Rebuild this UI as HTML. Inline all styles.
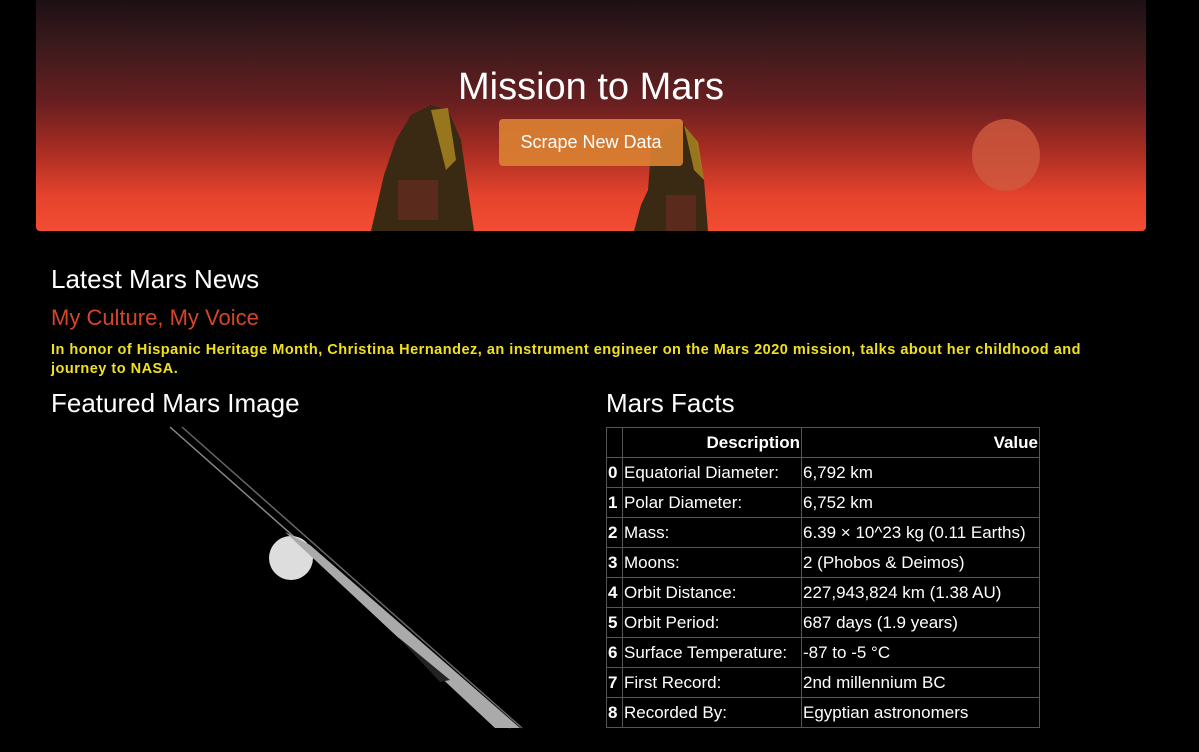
<!DOCTYPE html>
<html><head><meta charset="utf-8"><style>
*{margin:0;padding:0;box-sizing:border-box}
body{background:#000;width:1199px;height:752px;overflow:hidden;font-family:"Liberation Sans",sans-serif;color:#fff;position:relative}
.jumbo{position:absolute;left:36px;top:0;width:1110px;height:231px;border-radius:0 0 4px 4px;overflow:hidden;
background:linear-gradient(180deg,#1c1015 0%,#3c1a1c 20%,#6a1f20 45%,#a82d22 65%,#e5432c 85%,#f34d33 100%)}
.jumbo h1{position:absolute;left:0;right:0;top:66px;text-align:center;font-size:38px;font-weight:500}
.btn{position:absolute;left:463px;top:119px;width:184px;height:47px;border-radius:4px;background:rgba(220,130,50,.9);font-size:18px;line-height:47px;text-align:center}
.ab{position:absolute}
h2{position:absolute;font-size:26px;font-weight:500}
table{position:absolute;left:606px;top:427px;border-collapse:collapse;font-size:17px}
td,th{border:1px solid #555;height:30px;padding:0 1px;white-space:nowrap}
th{text-align:right;font-weight:bold}
td:first-child{font-weight:bold}
</style></head><body>
<div class="jumbo">
<svg class="ab" style="left:0;top:0" width="1110" height="231">
<g fill="#3a2a14">
<path d="M335 231 L348 175 L360 140 L375 115 L395 105 L412 110 L425 140 L432 190 L438 231Z"/>
<path d="M598 231 L605 205 L612 190 L615 150 L630 128 L648 124 L660 140 L668 180 L672 231Z"/>
</g>
<g fill="#b08a20" opacity=".8">
<path d="M395 110 L412 108 L420 160 L410 170Z"/>
<path d="M648 125 L662 142 L668 180 L658 170Z"/>
</g>
<rect x="362" y="180" width="40" height="40" fill="#5a2a1c"/>
<rect x="630" y="195" width="30" height="36" fill="#5a2a1c"/>
<ellipse cx="970" cy="155" rx="34" ry="36" fill="#d05a40" opacity=".8"/>
</svg>
<h1>Mission to Mars</h1>
<div class="btn">Scrape New Data</div>
</div>
<h2 style="left:51px;top:264px">Latest Mars News</h2>
<div class="ab" style="left:51px;top:305px;font-size:22px;color:#d4452a">My Culture, My Voice</div>
<div class="ab" style="left:51px;top:341px;width:1045px;font-size:14.5px;letter-spacing:0.5px;font-weight:bold;color:#f0e020;line-height:19px">In honor of Hispanic Heritage Month, Christina Hernandez, an instrument engineer on the Mars 2020 mission, talks about her childhood and journey to NASA.</div>
<h2 style="left:51px;top:388px">Featured Mars Image</h2>
<h2 style="left:606px;top:388px">Mars Facts</h2>
<svg class="ab" style="left:150px;top:420px" width="400" height="320">
<line x1="20" y1="7" x2="360" y2="308" stroke="#888" stroke-width="1.5"/>
<line x1="32" y1="7" x2="372" y2="308" stroke="#666" stroke-width="1.5"/>
<circle cx="141" cy="138" r="22" fill="#ddd"/>
<polygon points="135,112 160,125 370,308 345,308" fill="#aaa"/>
<path d="M248 217 L300 260 L290 262Z" fill="#222"/>
</svg>
<table>
<tr><th style="width:16px"></th><th style="width:179px">Description</th><th style="width:238px">Value</th></tr>
<tr><td>0</td><td>Equatorial Diameter:</td><td>6,792 km</td></tr>
<tr><td>1</td><td>Polar Diameter:</td><td>6,752 km</td></tr>
<tr><td>2</td><td>Mass:</td><td>6.39 × 10^23 kg (0.11 Earths)</td></tr>
<tr><td>3</td><td>Moons:</td><td>2 (Phobos &amp; Deimos)</td></tr>
<tr><td>4</td><td>Orbit Distance:</td><td>227,943,824 km (1.38 AU)</td></tr>
<tr><td>5</td><td>Orbit Period:</td><td>687 days (1.9 years)</td></tr>
<tr><td>6</td><td>Surface Temperature:</td><td>-87 to -5 °C</td></tr>
<tr><td>7</td><td>First Record:</td><td>2nd millennium BC</td></tr>
<tr><td>8</td><td>Recorded By:</td><td>Egyptian astronomers</td></tr>
</table>
</body></html>
